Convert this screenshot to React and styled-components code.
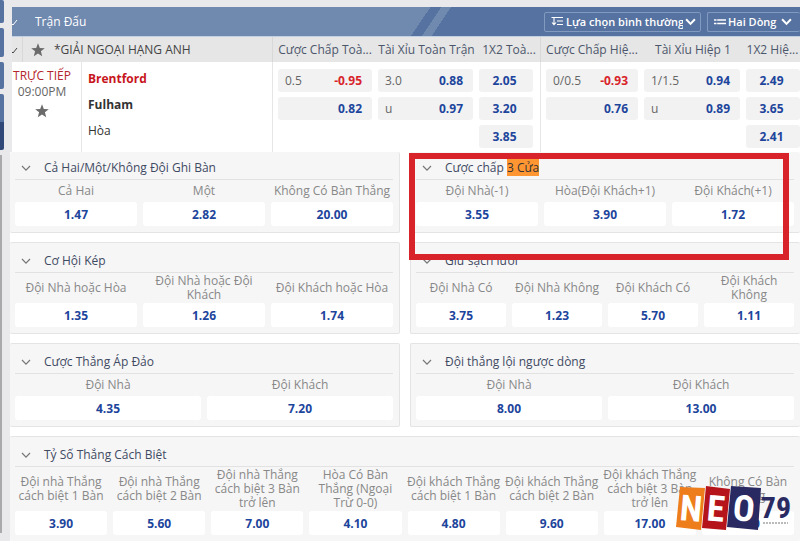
import React, { useState } from 'react'
import styled, { createGlobalStyle, css } from 'styled-components'

const fullTime = [
  { title: 'Cược Chấp Toà...', rows: [['0.5', '-0.95'], ['', '0.82']] },
  { title: 'Tài Xỉu Toàn Trận', rows: [['3.0', '0.88'], ['u', '0.97']] },
  { title: '1X2 Toà...', rows: [['2.05'], ['3.20'], ['3.85']] },
]

const firstHalf = [
  { title: 'Cược Chấp Hiệ...', rows: [['0/0.5', '-0.93'], ['', '0.76']] },
  { title: 'Tài Xỉu Hiệp 1', rows: [['1/1.5', '0.94'], ['u', '0.89']] },
  { title: '1X2 Hiệ...', rows: [['2.49'], ['3.65'], ['2.41']] },
]

const columns = [...fullTime, ...firstHalf]

const markets = [
  {
    title: 'Cả Hai/Một/Không Đội Ghi Bàn',
    side: 'left',
    first: true,
    picks: [['Cả Hai', '1.47'], ['Một', '2.82'], ['Không Có Bàn Thắng', '20.00']],
  },
  {
    title: 'Cược chấp ',
    found: '3 Cửa',
    side: 'right',
    first: true,
    picks: [['Đội Nhà(-1)', '3.55'], ['Hòa(Đội Khách+1)', '3.90'], ['Đội Khách(+1)', '1.72']],
  },
  {
    title: 'Cơ Hội Kép',
    side: 'left',
    lines: 2,
    picks: [['Đội Nhà hoặc Hòa', '1.35'], ['Đội Nhà hoặc Đội Khách', '1.26'], ['Đội Khách hoặc Hòa', '1.74']],
  },
  {
    title: 'Giữ sạch lưới',
    side: 'right',
    lines: 2,
    picks: [['Đội Nhà Có', '3.75'], ['Đội Nhà Không', '1.23'], ['Đội Khách Có', '5.70'], ['Đội Khách Không', '1.11']],
  },
  {
    title: 'Cược Thắng Áp Đảo',
    side: 'left',
    picks: [['Đội Nhà', '4.35'], ['Đội Khách', '7.20']],
  },
  {
    title: 'Đội thắng lội ngược dòng',
    side: 'right',
    picks: [['Đội Nhà', '8.00'], ['Đội Khách', '13.00']],
  },
  {
    title: 'Tỷ Số Thắng Cách Biệt',
    side: 'full',
    lines: 3,
    picks: [
      ['Đội nhà Thắng cách biệt 1 Bàn', '3.90'],
      ['Đội nhà Thắng cách biệt 2 Bàn', '5.60'],
      ['Đội nhà Thắng cách biệt 3 Bàn trở lên', '7.00'],
      ['Hòa Có Bàn Thắng (Ngoại Trừ 0-0)', '4.10'],
      ['Đội khách Thắng cách biệt 1 Bàn', '4.80'],
      ['Đội khách Thắng cách biệt 2 Bàn', '9.60'],
      ['Đội khách Thắng cách biệt 3 Bàn trở lên', '17.00'],
      ['Không Có Bàn Thắng', '9.00'],
    ],
  },
]

const Chevron = ({ size = 10, width = 1.2 }) => (
  <svg width={size} height={size} viewBox="0 0 10 10" fill="none" stroke="currentColor" strokeWidth={width} aria-hidden="true">
    <path d="M1 3 L5 7.2 L9 3" />
  </svg>
)

const Tick = () => (
  <svg width="6" height="8" viewBox="0 0 6 8" fill="none" stroke="currentColor" aria-hidden="true">
    <path d="M0 6 L1 7 L5 2" />
  </svg>
)

const Star = () => (
  <svg width="14" height="14" viewBox="0 0 14 14" fill="#6b6b6b" aria-hidden="true">
    <path d="M7 0.3 L8.8 5 L13.8 5.2 L9.9 8.3 L11.2 13.2 L7 10.4 L2.8 13.2 L4.1 8.3 L0.2 5.2 L5.2 5 Z" />
  </svg>
)

const SortIcon = () => (
  <svg width="13" height="11" viewBox="0 0 13 11" fill="none" stroke="currentColor" aria-hidden="true">
    <path d="M0.5 1.5 H12 M6 5 H12 M6 8.5 H12" strokeWidth="1.1" />
    <path d="M3 1.5 V8.5 M1 6.5 L3 8.7 L5 6.5" strokeWidth="1.1" />
  </svg>
)

const LinesIcon = () => (
  <svg width="12" height="8" viewBox="0 0 12 8" fill="none" stroke="currentColor" strokeWidth="1.4" aria-hidden="true">
    <path d="M0 2 H2.5 M3.2 2 H12 M0 5.5 H2.5 M3.2 5.5 H12" />
  </svg>
)

const Brand = () => (
  <svg width="116" height="56" viewBox="0 0 116 56" role="img" aria-label="NEO79">
    <path d="M4 2 L29 3 L25 45 L0 42 Z" fill="#ee7d1c" />
    <path d="M30 1 L54 4 L50 45 L26 43 Z" fill="#b5141b" />
    <path d="M55 1 L85 3 L82 45 L51 42 Z" fill="#2a2a62" />
    <g fontFamily="'Roboto Condensed', Roboto, sans-serif" fontWeight="700" textAnchor="middle">
      <text x="15" y="36" fontSize="36" fill="#fff" transform="rotate(5 15 23)">N</text>
      <text x="40" y="36" fontSize="36" fill="#fff" transform="rotate(5 40 23)">E</text>
      <text x="68" y="36" fontSize="36" fill="#fff" transform="rotate(5 68 23)">O</text>
      <text x="100" y="33" fontSize="30" fill="#2a2a62">79</text>
    </g>
    <path d="M87 38 H112" stroke="#777" strokeDasharray="2 1" />
  </svg>
)

const OddsCell = ({ row }) => {
  const price = row[row.length - 1]
  return (
    <OddsBtn $single={row.length === 1}>
      {row.length > 1 && <Line>{row[0]}</Line>}
      <Price $down={price.startsWith('-')}>{price}</Price>
    </OddsBtn>
  )
}

const Market = ({ market }) => {
  const [open, setOpen] = useState(true)
  return (
    <Panel $side={market.side} $first={market.first}>
      <PanelHead $first={market.first} aria-expanded={open} onClick={() => setOpen(!open)}>
        <Chevron />
        <span>
          {market.title}
          {market.found && <Found>{market.found}</Found>}
        </span>
      </PanelHead>
      {open && (
        <Picks $count={market.picks.length}>
          {market.picks.map(([name, price]) => (
            <Pick key={name}>
              <PickName $lines={market.lines}>{name}</PickName>
              <PickBtn aria-label={`${name} ${price}`}>{price}</PickBtn>
            </Pick>
          ))}
        </Picks>
      )}
      {market.found && <Highlight />}
    </Panel>
  )
}

const App = () => {
  return (
    <Page>
      <GlobalStyle />
      <Rail>
        <RailTab $h={23} />
        <RailTab $h={29} />
        <RailTab $h={27} />
        <RailTab $h={56} $active />
        <RailThumb />
      </Rail>
      <Main>
        <Top>
          <TitleBar>
            <Tick />
            <Title>Trận Đấu</Title>
            <Dropdown $w={157}>
              <SortIcon />
              <select aria-label="Lựa chọn">
                <option>Lựa chọn bình thường</option>
              </select>
              <Chevron size={11} width={1.8} />
            </Dropdown>
            <Dropdown $w={93} $flush>
              <LinesIcon />
              <select aria-label="Số dòng">
                <option>Hai Dòng</option>
              </select>
              <Chevron size={11} width={1.8} />
            </Dropdown>
          </TitleBar>
          <Table>
            <colgroup>
              <col width="11" />
              <col width="59" />
              <col />
              <col width="103" />
              <col width="101" />
              <col width="64" />
              <col width="101" />
              <col width="102" />
              <col width="57" />
            </colgroup>
            <thead>
              <tr>
                <TickHead><Tick /></TickHead>
                <LeagueHead colSpan="2">
                  <League>
                    <Star />
                    *GIẢI NGOẠI HẠNG ANH
                  </League>
                </LeagueHead>
                {columns.map((col, i) => (
                  <OddsHead key={col.title} $line={i % 3 === 0}>{col.title}</OddsHead>
                ))}
              </tr>
            </thead>
            <tbody>
              <tr>
                <TimeCell colSpan="2">
                  <Live>TRỰC TIẾP</Live>
                  <Clock>09:00PM</Clock>
                  <Star />
                </TimeCell>
                <TeamCell>
                  <Team $bold $red>Brentford</Team>
                  <Team $bold>Fulham</Team>
                  <Team>Hòa</Team>
                </TeamCell>
                {columns.map((col, i) => (
                  <OddsCol key={col.title} $index={i}>
                    <Stack>
                      {col.rows.map((row) => <OddsCell key={row.join()} row={row} />)}
                    </Stack>
                  </OddsCol>
                ))}
              </tr>
            </tbody>
          </Table>
        </Top>
        <Markets>
          {markets.map((market) => <Market key={market.title} market={market} />)}
          <BrandMark><Brand /></BrandMark>
        </Markets>
      </Main>
    </Page>
  )
}

const GlobalStyle = createGlobalStyle`
  * {
    box-sizing: border-box;
  }
  body {
    margin: 0;
    background: #fff;
    font-family: 'Open Sans', 'Noto Sans', sans-serif;
    font-size: 12px;
    color: #444;
  }
  button, select {
    font: inherit;
    color: inherit;
    border: none;
    background: none;
    padding: 0;
    margin: 0;
    cursor: pointer;
  }
  svg {
    flex: none;
  }
`

const Page = styled.div`
  display: flex;
  background: #e9e9eb;
`

const Rail = styled.aside`
  display: flex;
  flex-direction: column;
  flex: none;
  gap: 5px;
  width: 10px;
`

const RailTab = styled.div`
  width: 4px;
  height: ${(p) => p.$h}px;
  border-radius: 0 2px 2px 0;
  background: ${(p) => (p.$active ? 'linear-gradient(#5672a0 50%, #2f4878 50%)' : '#5672a0')};
`

const RailThumb = styled.div`
  flex: 1;
  width: 2px;
  margin-bottom: 8px;
  background: #a9a9ab;
`

const Main = styled.main`
  flex: 1;
  min-width: 0;
`

const Top = styled.div`
  padding: 7px 0 0 2px;
`

const TitleBar = styled.div`
  display: flex;
  align-items: center;
  height: 30px;
  color: #fff;
  border-bottom: 1px solid #c3cfe2;
  background: linear-gradient(124deg, #7089af 347px, #5672a0 347px 356px, #7089af 356px 364px, #5672a0 364px);
`

const Title = styled.div`
  flex: 1;
  padding-left: 17px;
`

const Dropdown = styled.div`
  display: flex;
  align-items: center;
  gap: 2px;
  width: ${(p) => p.$w}px;
  height: 20px;
  padding: 0 4px 0 6px;
  font-size: 11px;
  font-weight: 600;
  border: 1px solid #8299c0;
  border-radius: 2px;
  ${(p) => p.$flush && css`
    margin-left: 6px;
    padding-right: 8px;
    border-right: none;
  `}

  select {
    flex: 1;
    min-width: 0;
    appearance: none;
  }
`

const Table = styled.table`
  width: 100%;
  table-layout: fixed;
  border-collapse: separate;
  border-spacing: 0;
  background: #fff;

  th {
    height: 25px;
    padding: 0;
    font-weight: 400;
    background: #e6e6e6;
  }
  td {
    height: 90px;
    padding: 0;
    vertical-align: top;
  }
`

const TickHead = styled.th`
  text-align: left;
  border-right: 1px solid #d8d8d8;
`

const LeagueHead = styled.th`
  text-align: left;
`

const League = styled.div`
  display: flex;
  align-items: center;
  gap: 9px;
  padding-left: 8px;
`

const OddsHead = styled.th`
  color: #4c566b;
  white-space: nowrap;
  border-left: ${(p) => (p.$line ? '1px solid #d8d8d8' : 'none')};
  && {
    padding-left: 2px;
  }
`

const TimeCell = styled.td`
  text-align: center;
  line-height: 16px;
  border-right: 1px solid #e6e6e6;
  && {
    padding: 6px 9px 0 0;
  }
  svg {
    margin-top: 4px;
  }
`

const Live = styled.div`
  color: #b5262c;
  white-space: nowrap;
`

const Clock = styled.div`
  color: #666;
`

const TeamCell = styled.td`
  && {
    padding: 4px 6px;
  }
`

const Team = styled.div`
  height: 26px;
  line-height: 26px;
  font-weight: ${(p) => (p.$bold ? 700 : 400)};
  color: ${(p) => (p.$red ? '#c8161d' : '#333')};
`

const OddsCol = styled.td`
  && {
    padding: 7px 3px 0;
    ${(p) => p.$index % 3 === 0 && css`
      padding-left: 5px;
      border-left: 1px solid #e6e6e6;
    `}
    ${(p) => p.$index === 2 && css`
      padding-right: 7px;
    `}
    ${(p) => p.$index === 5 && css`
      padding-right: 0;
    `}
  }
`

const Stack = styled.div`
  display: flex;
  flex-direction: column;
  gap: 5px;
`

const OddsBtn = styled.button`
  display: flex;
  align-items: center;
  justify-content: ${(p) => (p.$single ? 'center' : 'space-between')};
  width: 100%;
  height: 23px;
  padding: ${(p) => (p.$single ? '0 3px 0 0' : '0 10px 0 7px')};
  border-radius: 3px;
  background: #f2f2f2;
`

const Line = styled.span`
  color: #666;
`

const Price = styled.span`
  font-weight: 700;
  color: ${(p) => (p.$down ? '#d8232a' : '#1d459c')};
`

const Markets = styled.div`
  position: relative;
  display: grid;
  grid-template-columns: 1fr 1fr;
  gap: 9px 10px;
  background: #fff;
`

const Panel = styled.section`
  position: relative;
  padding: 0 6px 6px 5px;
  background: #f6f6f6;
  border: 1px solid #e4e4e4;
  border-radius: 2px;
  ${(p) => p.$side !== 'right' && css`
    border-left: none;
  `}
  ${(p) => p.$side !== 'left' && css`
    border-right: none;
  `}
  ${(p) => p.$first && css`
    border-top: none;
  `}
  ${(p) => p.$side === 'full' && css`
    grid-column: 1 / -1;
    border-bottom: none;
  `}
`

const PanelHead = styled.button`
  display: flex;
  align-items: center;
  gap: 13px;
  width: 100%;
  height: ${(p) => (p.$first ? 28 : 30)}px;
  padding: ${(p) => (p.$first ? 4 : 6)}px 0 0 6px;
  text-align: left;
  color: #3f4a63;
  border-bottom: 1px solid #e2e2e2;

  svg {
    color: #777;
  }
`

const Found = styled.mark`
  color: #333;
  background: #ff9632;
`

const Picks = styled.div`
  display: grid;
  grid-template-columns: repeat(${(p) => p.$count}, 1fr);
  gap: 6px;
`

const Pick = styled.div`
  display: flex;
  flex-direction: column;
  min-width: 0;
`

const PickName = styled.div`
  display: flex;
  align-items: center;
  justify-content: center;
  height: ${(p) => (p.$lines === 3 ? 44 : p.$lines === 2 ? 30 : 22)}px;
  margin: 0 -2px;
  line-height: 14px;
  text-align: center;
  color: #888;
`

const PickBtn = styled.button`
  height: 24px;
  font-weight: 700;
  color: #1d459c;
  border-radius: 3px;
  background: #fff;
`

const Highlight = styled.div`
  position: absolute;
  z-index: 1;
  top: 1px;
  left: -2px;
  right: 11px;
  height: 107px;
  border: 6px solid #d9232b;
  pointer-events: none;
`

const BrandMark = styled.div`
  position: absolute;
  right: 8px;
  bottom: 0;
  line-height: 0;
`

export default App
